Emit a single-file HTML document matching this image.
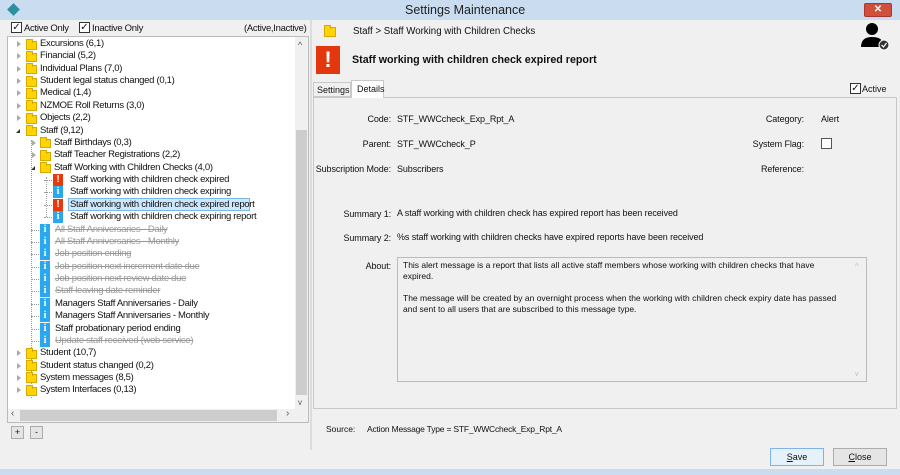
<!DOCTYPE html>
<html><head><meta charset="utf-8"><style>
*{margin:0;padding:0;box-sizing:border-box}
body{width:900px;height:475px;overflow:hidden;background:#f0f0f0;font-family:"Liberation Sans",sans-serif;font-size:9px;color:#111;position:relative}
.a{position:absolute;white-space:nowrap}
.title{left:0;top:0;width:900px;height:20px;background:#c9dcf0;}
.fold{position:absolute;width:11px;height:9px;background:#ffd400;border:1px solid #d9a800}
.fold:before{content:"";position:absolute;left:-1px;top:-3px;width:5px;height:3px;background:#ffd400;border:1px solid #d9a800;border-bottom:none}
.exp{position:absolute;width:0;height:0;border-left:4px solid #aaa;border-top:3.5px solid transparent;border-bottom:3.5px solid transparent}
.exp.o{border:none;width:0;height:0;border-right:4px solid #333;border-top:4px solid transparent}
.ic{position:absolute;width:10px;height:12px;color:#fff;font-weight:bold;text-align:center;font-size:10px;line-height:12px}
.r{background:#e8380c}.i{background:#29a8ef;font-family:"Liberation Serif",serif}
.t{position:absolute;white-space:nowrap;line-height:12px;font-size:9.5px;letter-spacing:-0.3px}
.s{color:#999;text-decoration:line-through}
.cb{position:absolute;width:11px;height:11px;border:1px solid #333;background:#fff;font-size:10px;line-height:9px;text-align:center}
.lbl{position:absolute;text-align:right;white-space:nowrap}
.btn{position:absolute;height:18px;border:1px solid #acacac;background:#e5e5e5;text-align:center;line-height:16px}
.rt{font-size:9px;letter-spacing:-0.1px}
</style></head><body>
<div class="a title"></div>
<div class="a" style="left:9px;top:5px;width:9px;height:9px;background:#2f8fa0;transform:rotate(45deg)"></div>
<div class="a" style="left:405px;top:3px;font-size:12.5px;color:#222">Settings Maintenance</div>
<div class="a" style="left:864px;top:3px;width:28px;height:14px;background:#d0503c;border:1px solid #a33;border-radius:2px;color:#fff;font-size:10px;text-align:center;line-height:12px;font-weight:bold">✕</div>
<div class="a" style="left:0;top:469px;width:900px;height:6px;background:#c9dcf0"></div>

<div class="cb" style="left:11px;top:22px">✓</div><div class="a" style="left:24px;top:23px;font-size:9.5px;letter-spacing:-0.3px">Active Only</div>
<div class="cb" style="left:79px;top:22px">✓</div><div class="a" style="left:92px;top:23px;font-size:9.5px;letter-spacing:-0.3px">Inactive Only</div>
<div class="a" style="left:244px;top:23px;font-size:9.5px;letter-spacing:-0.3px">(Active,Inactive)</div>

<div class="a" style="left:7px;top:36px;width:302px;height:387px;background:#fff;border:1px solid #bbb"></div>
<div class="a" style="left:295px;top:37px;width:13px;height:372px;background:#f0f0f0"></div>
<div class="a" style="left:296px;top:130px;width:11px;height:265px;background:#cdcdcd"></div>
<div class="a" style="left:298px;top:40px;font-size:9px;color:#555">^</div>
<div class="a" style="left:298px;top:398px;font-size:8px;color:#555">v</div>
<div class="a" style="left:8px;top:409px;width:300px;height:13px;background:#f0f0f0"></div>
<div class="a" style="left:20px;top:410px;width:257px;height:11px;background:#cdcdcd"></div>
<div class="a" style="left:11px;top:408px;font-size:10px;color:#555">‹</div>
<div class="a" style="left:286px;top:408px;font-size:10px;color:#555">›</div>
<div class="btn" style="left:11px;top:426px;width:13px;height:13px;line-height:11px">+</div>
<div class="btn" style="left:30px;top:426px;width:13px;height:13px;line-height:11px">-</div>

<div class="a" style="left:31px;top:140px;height:258px;border-left:1px dotted #999"></div>
<div class="a" style="left:46px;top:177px;height:40px;border-left:1px dotted #999"></div>

<div id="tree"></div>
<script>
var rows=[
[0,'f','Excursions (6,1)'],[0,'f','Financial (5,2)'],[0,'f','Individual Plans (7,0)'],[0,'f','Student legal status changed (0,1)'],
[0,'f','Medical (1,4)'],[0,'f','NZMOE Roll Returns (3,0)'],[0,'f','Objects (2,2)'],[0,'fo','Staff (9,12)'],
[1,'f','Staff Birthdays (0,3)'],[1,'f','Staff Teacher Registrations (2,2)'],[1,'fo','Staff Working with Children Checks (4,0)'],
[2,'r','Staff working with children check expired'],[2,'i','Staff working with children check expiring'],
[2,'rs','Staff working with children check expired report'],[2,'i','Staff working with children check expiring report'],
[1,'i','All Staff Anniversaries - Daily',1],[1,'i','All Staff Anniversaries - Monthly',1],[1,'i','Job position ending',1],
[1,'i','Job position next increment date due',1],[1,'i','Job position next review date due',1],[1,'i','Staff leaving date reminder',1],
[1,'i','Managers Staff Anniversaries - Daily'],[1,'i','Managers Staff Anniversaries - Monthly'],[1,'i','Staff probationary period ending'],
[1,'i','Update staff received (web service)',1],
[0,'f','Student (10,7)'],[0,'f','Student status changed (0,2)'],[0,'f','System messages (8,5)'],[0,'f','System Interfaces (0,13)']];
var h='';
rows.forEach(function(r,k){
 var y=38+k*12.37,lv=r[0],ty=r[1];
 var ix=[26,40,53][lv], ex=[17,32,32][lv];
 if(ty[0]=='f'){
  if(ty=='fo') h+='<div class="exp o" style="left:'+(ex-1)+'px;top:'+(y+4)+'px"></div>';
  else h+='<div class="exp" style="left:'+ex+'px;top:'+(y+3)+'px"></div>';
  h+='<div class="fold" style="left:'+ix+'px;top:'+(y+2.5)+'px"></div>';
  h+='<div class="t" style="left:'+(ix+14)+'px;top:'+y+'px">'+r[2]+'</div>';
 } else {
  var red=ty[0]=='r';
  h+='<div class="a" style="left:'+(ix-9)+'px;top:'+(y+6)+'px;width:8px;border-top:1px dotted #999"></div>';
  h+='<div class="ic '+(red?'r':'i')+'" style="left:'+ix+'px;top:'+y+'px">'+(red?'!':'i')+'</div>';
  var tx=ix+(lv==2?17:15);
  if(ty=='rs') h+='<div class="a" style="left:'+(tx-2)+'px;top:'+(y-0.5)+'px;width:182px;height:13px;background:#cce8ff;border:1px solid #7ab8e8"></div>';
  h+='<div class="t'+(r[3]?' s':'')+'" style="left:'+tx+'px;top:'+y+'px">'+r[2]+'</div>';
 }
});
document.getElementById('tree').innerHTML=h;
</script>

<div class="a" style="left:310px;top:20px;width:2px;height:430px;background:#dcdcdc"></div>

<div class="fold" style="left:324px;top:27px;width:12px;height:10px"></div>
<div class="a" style="left:353px;top:26px;font-size:9.7px">Staff &gt; Staff Working with Children Checks</div>
<div class="a" style="left:316px;top:46px;width:24px;height:28px;background:#e3380d;color:#fff;font-weight:bold;font-size:22px;text-align:center;line-height:28px">!</div>
<div class="a" style="left:352px;top:54px;font-weight:bold;font-size:10.7px">Staff working with children check expired report</div>
<svg class="a" style="left:860px;top:21px" width="32" height="30" viewBox="0 0 32 30"><circle cx="12" cy="8" r="6" fill="#000"/><path d="M1 26 Q1 16 12 16 Q20 16 22 20 L22 26Z" fill="#000"/><circle cx="24" cy="24" r="5" fill="#333" stroke="#fff"/><path d="M21.5 24 l2 2 l3 -4" stroke="#fff" fill="none" stroke-width="1.2"/></svg>

<div class="a" style="left:313px;top:82px;width:38px;height:15px;border:1px solid #c8c8c8;background:#f0f0f0;font-size:9px;padding:2px 3px">Settings</div>
<div class="a" style="left:351px;top:80px;width:33px;height:18px;border:1px solid #c8c8c8;border-bottom:none;background:#fff;font-size:9px;padding:3px 5px;z-index:2">Details</div>
<div class="cb" style="left:850px;top:83px">✓</div><div class="a" style="left:862px;top:84px;font-size:9px">Active</div>
<div class="a" style="left:313px;top:97px;width:584px;height:312px;border:1px solid #c8c8c8;background:#f0f0f0"></div>

<div class="rt">
<div class="lbl" style="right:509px;top:114px">Code:</div><div class="a" style="left:397px;top:114px">STF_WWCcheck_Exp_Rpt_A</div>
<div class="lbl" style="right:509px;top:139px">Parent:</div><div class="a" style="left:397px;top:139px">STF_WWCcheck_P</div>
<div class="lbl" style="right:509px;top:164px">Subscription Mode:</div><div class="a" style="left:397px;top:164px">Subscribers</div>
<div class="lbl" style="right:96px;top:114px">Category:</div><div class="a" style="left:821px;top:114px">Alert</div>
<div class="lbl" style="right:96px;top:139px">System Flag:</div><div class="a" style="left:821px;top:138px;width:11px;height:11px;border:1px solid #555;background:#fff"></div>
<div class="lbl" style="right:96px;top:164px">Reference:</div>
<div class="lbl" style="right:509px;top:209px">Summary 1:</div><div class="a" style="left:397px;top:208px">A staff working with children check has expired report has been received</div>
<div class="lbl" style="right:509px;top:233px">Summary 2:</div><div class="a" style="left:397px;top:232px">%s staff working with children checks have expired reports have been received</div>
<div class="lbl" style="right:509px;top:261px">About:</div>
</div>
<div class="a" style="left:397px;top:257px;width:470px;height:125px;border:1px solid #bbb;background:#f0f0f0"></div>
<div class="a" style="left:403px;top:260px;white-space:normal;width:440px;line-height:11px;font-size:8.5px">This alert message is a report that lists all active staff members whose working with children checks that have expired.<br><br>The message will be created by an overnight process when the working with children check expiry date has passed and sent to all users that are subscribed to this message type.</div>
<div class="a" style="left:855px;top:262px;font-size:8px;color:#bbb">^</div>
<div class="a" style="left:855px;top:371px;font-size:7px;color:#bbb">v</div>

<div class="a" style="left:326px;top:424px;font-size:8.5px">Source:</div>
<div class="a" style="left:367px;top:424px;font-size:8.5px;letter-spacing:-0.2px">Action Message Type = STF_WWCcheck_Exp_Rpt_A</div>
<div class="btn" style="left:770px;top:448px;width:54px;border-color:#7eb4ea;background:#e5f1fb"><u>S</u>ave</div>
<div class="btn" style="left:833px;top:448px;width:54px"><u>C</u>lose</div>
</body></html>
